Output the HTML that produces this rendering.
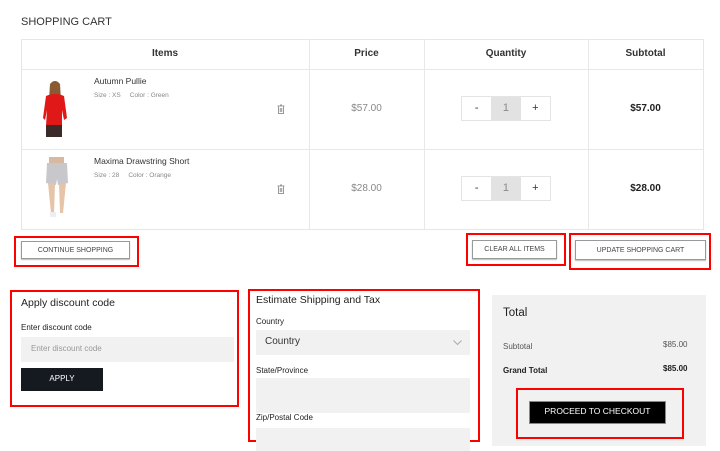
<!DOCTYPE html>
<html><head><meta charset="utf-8"><style>
*{margin:0;padding:0;box-sizing:border-box}
body{width:720px;height:451px;overflow:hidden;background:#fff;font-family:"Liberation Sans",sans-serif;color:#222;position:relative}
.a{position:absolute}
.t{position:absolute;white-space:nowrap}
.ln{position:absolute;background:#e8e8e8}
.btn{position:absolute;border:1px solid #999;box-shadow:0 1px 1px #bbb;background:#fff;font-size:7px;color:#444;text-align:center}
.red{position:absolute;border:2px solid #f00}
.inp{position:absolute;background:#f1f1f1}
.q{position:absolute;border:1px solid #e4e4e4;width:90px;height:25px;display:flex;font-size:11px;color:#333}
.q div{flex:1;text-align:center;line-height:23px}
.q div:nth-child(2){background:#e2e2e2;color:#888}
</style></head><body>
<div class="t" style="left:21px;top:16px;font-size:11px;color:#333">SHOPPING CART</div>
<div class="a" style="left:21px;top:39px;width:683px;height:191px;border:1px solid #e6e6e6"></div>
<div class="ln" style="left:21px;top:69px;width:683px;height:1px"></div>
<div class="ln" style="left:21px;top:149px;width:683px;height:1px"></div>
<div class="ln" style="left:309px;top:39px;width:1px;height:191px"></div>
<div class="ln" style="left:424px;top:39px;width:1px;height:191px"></div>
<div class="ln" style="left:588px;top:39px;width:1px;height:191px"></div>
<div class="t" style="left:21px;width:288px;text-align:center;top:48px;font-size:10px;font-weight:bold;color:#333">Items</div>
<div class="t" style="left:309px;width:115px;text-align:center;top:48px;font-size:10px;font-weight:bold;color:#333">Price</div>
<div class="t" style="left:424px;width:164px;text-align:center;top:48px;font-size:10px;font-weight:bold;color:#333">Quantity</div>
<div class="t" style="left:588px;width:115px;text-align:center;top:48px;font-size:10px;font-weight:bold;color:#333">Subtotal</div>
<svg class="a" style="left:40px;top:78px" width="30" height="62"><circle cx="15" cy="8" r="5" fill="#c8906a"/><path d="M10 6 Q15 0 20 6 L21 22 L9 22Z" fill="#8a5a30"/><path d="M6 18 Q15 14 24 18 L27 40 L24 42 L22 32 L22 48 L6 48 L7 32 L5 42 L3 40Z" fill="#e01818"/><rect x="6" y="47" width="16" height="12" fill="#3a2a28"/></svg>
<svg class="a" style="left:44px;top:157px" width="26" height="62"><rect x="5" y="0" width="15" height="8" fill="#d8b8a0"/><path d="M3 6 L23 6 L24 26 L14 28 L13 22 L12 28 L2 26Z" fill="#c8c8cc"/><path d="M4 26 L11 27 L10 56 L7 56Z M15 27 L22 26 L19 56 L16 56Z" fill="#e6c4a8"/><rect x="6" y="55" width="6" height="5" fill="#eee"/></svg>
<div class="t" style="left:94px;top:76px;font-size:8.5px;color:#333">Autumn Pullie</div>
<div class="t" style="left:94px;top:92px;font-size:6.5px;color:#888">Size : XS&nbsp;&nbsp;&nbsp;&nbsp;&nbsp;Color : Green</div>
<div class="t" style="left:94px;top:156px;font-size:8.5px;color:#333">Maxima Drawstring Short</div>
<div class="t" style="left:94px;top:172px;font-size:6.5px;color:#888">Size : 28&nbsp;&nbsp;&nbsp;&nbsp;&nbsp;Color : Orange</div>
<svg class="a" style="left:277px;top:104px" width="8" height="10"><path d="M0.5 2h7M3 1h2M1.5 2.5v7h5v-7M3.3 4v4M4.7 4v4" stroke="#999" stroke-width="1" fill="none"/></svg>
<svg class="a" style="left:277px;top:184px" width="8" height="10"><path d="M0.5 2h7M3 1h2M1.5 2.5v7h5v-7M3.3 4v4M4.7 4v4" stroke="#999" stroke-width="1" fill="none"/></svg>
<div class="t" style="left:309px;width:115px;text-align:center;top:103px;font-size:10px;color:#888">$57.00</div>
<div class="t" style="left:309px;width:115px;text-align:center;top:183px;font-size:10px;color:#888">$28.00</div>
<div class="q" style="left:461px;top:96px"><div>-</div><div>1</div><div>+</div></div>
<div class="q" style="left:461px;top:176px"><div>-</div><div>1</div><div>+</div></div>
<div class="t" style="left:588px;width:115px;text-align:center;top:103px;font-size:10px;font-weight:bold;color:#222">$57.00</div>
<div class="t" style="left:588px;width:115px;text-align:center;top:183px;font-size:10px;font-weight:bold;color:#222">$28.00</div>
<div class="btn" style="left:21px;top:241px;width:109px;height:18px;line-height:17px">CONTINUE SHOPPING</div>
<div class="red" style="left:14px;top:236px;width:125px;height:31px"></div>
<div class="btn" style="left:472px;top:240px;width:85px;height:19px;line-height:18px">CLEAR ALL ITEMS</div>
<div class="red" style="left:466px;top:233px;width:100px;height:33px"></div>
<div class="btn" style="left:575px;top:240px;width:131px;height:20px;line-height:19px">UPDATE SHOPPING CART</div>
<div class="red" style="left:569px;top:233px;width:142px;height:37px"></div>
<div class="red" style="left:10px;top:290px;width:229px;height:117px"></div>
<div class="t" style="left:21px;top:297px;font-size:10.5px;color:#222">Apply discount code</div>
<div class="t" style="left:21px;top:323px;font-size:8px;color:#222">Enter discount code</div>
<div class="inp" style="left:21px;top:337px;width:213px;height:25px"></div>
<div class="t" style="left:31px;top:344px;font-size:8px;color:#999">Enter discount code</div>
<div class="a" style="left:21px;top:368px;width:82px;height:23px;background:#151a20;color:#fff;font-size:8px;text-align:center;line-height:22px">APPLY</div>
<div class="red" style="left:248px;top:289px;width:232px;height:153px"></div>
<div class="t" style="left:256px;top:294px;font-size:10.5px;color:#222">Estimate Shipping and Tax</div>
<div class="t" style="left:256px;top:317px;font-size:8px;color:#222">Country</div>
<div class="inp" style="left:256px;top:330px;width:214px;height:25px"></div>
<div class="t" style="left:265px;top:336px;font-size:10px;color:#333">Country</div>
<svg class="a" style="left:453px;top:340px" width="9" height="6"><path d="M0.5 0.5L4.5 4.5L8.5 0.5" stroke="#aaa" fill="none"/></svg>
<div class="t" style="left:256px;top:366px;font-size:8px;color:#222">State/Province</div>
<div class="inp" style="left:256px;top:378px;width:214px;height:35px"></div>
<div class="t" style="left:256px;top:413px;font-size:8px;color:#222">Zip/Postal Code</div>
<div class="inp" style="left:256px;top:428px;width:214px;height:23px"></div>
<div class="a" style="left:492px;top:295px;width:214px;height:151px;background:#f1f1f1"></div>
<div class="t" style="left:503px;top:307px;font-size:11.5px;color:#222">Total</div>
<div class="t" style="left:503px;top:342px;font-size:8px;color:#555">Subtotal</div>
<div class="t" style="left:663px;top:340px;font-size:8px;color:#555">$85.00</div>
<div class="t" style="left:503px;top:366px;font-size:8px;font-weight:bold;color:#222">Grand Total</div>
<div class="t" style="left:663px;top:364px;font-size:8px;font-weight:bold;color:#222">$85.00</div>
<div class="a" style="left:529px;top:401px;width:137px;height:23px;background:#000;color:#fff;font-size:8.5px;text-align:center;line-height:19px;border:1px solid #888">PROCEED TO CHECKOUT</div>
<div class="red" style="left:516px;top:388px;width:168px;height:51px"></div>
</body></html>
